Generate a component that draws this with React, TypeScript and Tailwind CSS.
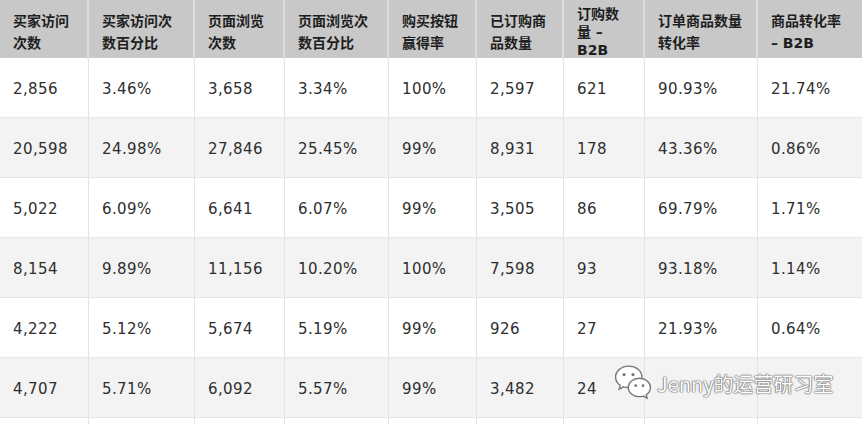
import React from 'react';

const COLS = 'grid grid-cols-[89px_106px_90px_104px_88px_87px_81px_113px_104px]';

const HEADERS: { lines: string[]; tight?: boolean }[] = [
  { lines: ['买家访问', '次数'] },
  { lines: ['买家访问次', '数百分比'] },
  { lines: ['页面浏览', '次数'] },
  { lines: ['页面浏览次', '数百分比'] },
  { lines: ['购买按钮', '赢得率'] },
  { lines: ['已订购商', '品数量'] },
  { lines: ['订购数', '量 –', 'B2B'], tight: true },
  { lines: ['订单商品数量', '转化率'] },
  { lines: ['商品转化率', '– B2B'] },
];

const ROWS: string[][] = [
  ['2,856', '3.46%', '3,658', '3.34%', '100%', '2,597', '621', '90.93%', '21.74%'],
  ['20,598', '24.98%', '27,846', '25.45%', '99%', '8,931', '178', '43.36%', '0.86%'],
  ['5,022', '6.09%', '6,641', '6.07%', '99%', '3,505', '86', '69.79%', '1.71%'],
  ['8,154', '9.89%', '11,156', '10.20%', '100%', '7,598', '93', '93.18%', '1.14%'],
  ['4,222', '5.12%', '5,674', '5.19%', '99%', '926', '27', '21.93%', '0.64%'],
  ['4,707', '5.71%', '6,092', '5.57%', '99%', '3,482', '24', '', ''],
  ['', '', '', '', '', '', '', '', ''],
];

function WeChatLogo() {
  return (
    <svg width="38" height="36" viewBox="0 0 36 34">
      {/* back bubble */}
      <path
        d="M14 2C7 2 1.5 6.6 1.5 12.3c0 3.2 1.7 6 4.4 7.9l-1 3.6 4.2-2.2c1.5.4 3.1.7 4.8.7 7 0 12.5-4.6 12.5-10.3S21 2 14 2z"
        fill="#fff"
        stroke="#777"
        strokeWidth="1.3"
      />
      <circle cx="9.5" cy="10" r="1.5" fill="#777" />
      <circle cx="18" cy="10" r="1.5" fill="#777" />
      {/* front bubble */}
      <path
        d="M24 13.5c-5.9 0-10.5 3.9-10.5 8.7s4.6 8.7 10.5 8.7c1.3 0 2.6-.2 3.8-.6l3.6 2-.9-3.2c2.4-1.6 4-4 4-6.9 0-4.8-4.6-8.7-10.5-8.7z"
        fill="#fff"
        stroke="#777"
        strokeWidth="1.3"
      />
      <circle cx="20.5" cy="20.5" r="1.3" fill="#777" />
      <circle cx="27.5" cy="20.5" r="1.3" fill="#777" />
    </svg>
  );
}

export default function App() {
  return (
    <div className="relative w-[862px] h-[424px] overflow-hidden bg-white font-['DejaVu_Sans','Noto_Sans_CJK_SC',sans-serif]">
      {/* header */}
      <div className={`${COLS} h-[58px] bg-[#c8c8c8]`}>
        {HEADERS.map((h, i) => (
          <div
            key={i}
            className={`flex flex-col justify-center pl-[13px] pt-[5px] text-[14px] font-bold text-[#1e1e1e] whitespace-nowrap ${
              h.tight ? 'leading-[18px]' : 'leading-[22px]'
            } ${i < HEADERS.length - 1 ? 'border-r-2 border-[#dcdcdc]' : ''}`}
          >
            {h.lines.map((l, j) => (
              <span key={j}>{l}</span>
            ))}
          </div>
        ))}
      </div>

      {/* body */}
      {ROWS.map((row, r) => (
        <div
          key={r}
          className={`${COLS} h-[60px] border-b border-[#e6e6e6] ${r % 2 === 1 ? 'bg-[#f3f3f3]' : 'bg-white'}`}
        >
          {row.map((v, c) => (
            <div
              key={c}
              className={`flex items-center pl-[13px] pt-[3px] text-[15px] tracking-[0.4px] text-[#2e2e2e] ${
                c < row.length - 1 ? 'border-r border-[#e4e4e4]' : ''
              }`}
            >
              {v}
            </div>
          ))}
        </div>
      ))}

      {/* watermark */}
      <div className="absolute left-[614px] top-[364px] flex items-center gap-[5px]">
        <WeChatLogo />
        <span className="mt-[4px] text-[20px] text-white leading-none [text-shadow:0_0_1px_#555,0_0_1px_#555,0_0_2px_#777] font-['Noto_Sans_CJK_SC',sans-serif]">
          Jenny的运营研习室
        </span>
      </div>
    </div>
  );
}
